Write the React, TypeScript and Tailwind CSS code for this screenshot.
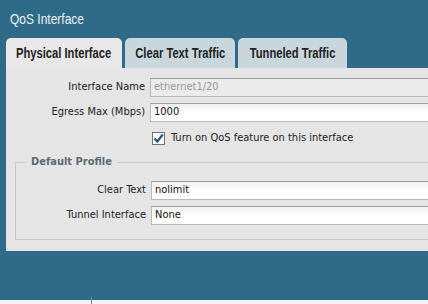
import React from "react";

const narrow = { fontFamily: '"Liberation Sans", Arial, sans-serif' };
const body = { fontFamily: '"DejaVu Sans Condensed", "DejaVu Sans", sans-serif' };

function Field({ value, disabled }: { value: string; disabled?: boolean }) {
  return (
    <div
      className={`h-[19px] flex-1 border border-[#b9b9b9] border-t-[#9d9d9d] border-r-0 pl-[3px] flex items-center text-[11px] ${
        disabled ? "bg-[#ebebeb] text-[#9a9a9a]" : "bg-gradient-to-b from-[#f0f0f0] to-white via-white text-[#111]"
      }`}
    >
      {value}
    </div>
  );
}

function Row({ label, value, disabled, labelW }: { label: string; value: string; disabled?: boolean; labelW: string }) {
  return (
    <div className="flex items-center">
      <div className={`${labelW} text-right pr-[5px] text-[11px] text-[#222]`}>{label}</div>
      <Field value={value} disabled={disabled} />
    </div>
  );
}

function Tab({ label, w, active }: { label: string; w: string; active?: boolean }) {
  return (
    <div
      className={`h-[30px] ${w} ${active ? "bg-[#e8e8e8]" : "bg-[#c9d7dd]"} rounded-t-[5px] flex items-center justify-center`}
    >
      <span className="inline-block whitespace-nowrap font-bold text-[14px] text-[#222] scale-x-[0.8]" style={narrow}>
        {label}
      </span>
    </div>
  );
}

export default function App() {
  return (
    <div className="w-[428px] h-[304px] bg-[#2f6a88] flex flex-col overflow-hidden" style={body}>
      <div className="h-[38px] pl-[10px] pt-[7px]">
        <span className="inline-block origin-left scale-x-[0.8] whitespace-nowrap text-[15px] text-[#eef3f6]" style={narrow}>
          QoS Interface
        </span>
      </div>
      <div className="flex pl-[6px] gap-[3px] h-[30px] items-end">
        <Tab label="Physical Interface" w="w-[116px]" active />
        <Tab label="Clear Text Traffic" w="w-[110px]" />
        <Tab label="Tunneled Traffic" w="w-[109px]" />
      </div>
      <div className="ml-[6px] h-[183px] bg-[#e5e5e5] flex flex-col pt-[10px]">
        <div className="flex flex-col gap-[6px]">
          <Row label="Interface Name" value="ethernet1/20" disabled labelW="w-[144px]" />
          <Row label="Egress Max (Mbps)" value="1000" labelW="w-[144px]" />
        </div>
        <div className="flex items-center ml-[146px] mt-[8px] gap-[6px]">
          <div className="w-[13px] h-[13px] border border-[#707070] bg-white flex items-center justify-center">
            <svg width="11" height="11" viewBox="0 0 11 11">
              <path d="M1.5 5.5 L4.3 8.5 L9.8 1.5" stroke="#2a4f8a" strokeWidth="2.2" fill="none" />
            </svg>
          </div>
          <span className="text-[11px] text-[#222]">Turn on QoS feature on this interface</span>
        </div>
        <div className="relative mt-[15px] ml-[9px] h-[78px] border border-[#c8c8c8] border-r-0">
          <div className="absolute -top-[9px] left-[10px] px-[5px] bg-[#e5e5e5] text-[11px] font-bold text-[#5b6a76]">
            Default Profile
          </div>
          <div className="flex flex-col gap-[6px] pt-[18px]">
            <Row label="Clear Text" value="nolimit" labelW="w-[135px]" />
            <Row label="Tunnel Interface" value="None" labelW="w-[135px]" />
          </div>
        </div>
      </div>
      <div className="flex-1" />
      <div className="h-[4px] bg-[#f2f2f2] relative">
        <div className="absolute left-[91px] -top-[3px] w-[1px] h-[7px] bg-[#888]" />
      </div>
    </div>
  );
}
